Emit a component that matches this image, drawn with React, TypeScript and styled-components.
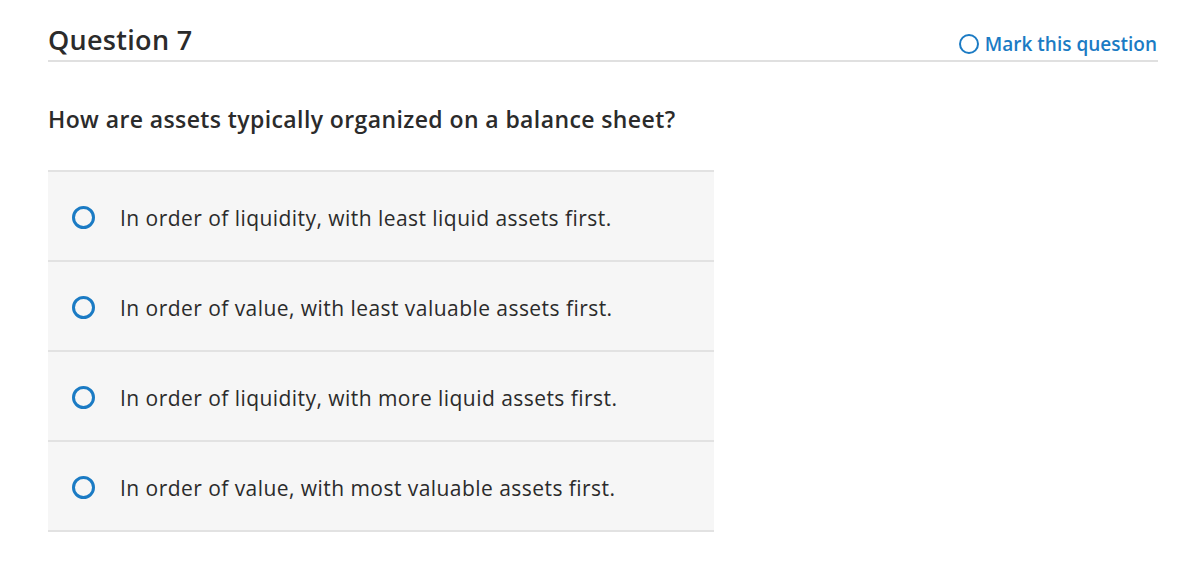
import React from 'react';
import styled, { createGlobalStyle } from 'styled-components';

const GlobalStyle = createGlobalStyle`
    html, body {
        margin: 0;
        padding: 0;
        background: #ffffff;
    }
    body {
        font-family: "Open Sans", Lato, Arial, sans-serif;
        color: #2b2b2b;
    }
`

const Page = styled.div`
    padding: 23px 22px 0 48px;
    width: 1110px;
`

const Header = styled.div`
    display: flex;
    justify-content: space-between;
    align-items: flex-end;
    border-bottom: 2px solid #e0e0e0;
    padding-bottom: 3px;
`

const Title = styled.h1`
    margin: 0;
    font-size: 27px;
    font-weight: 600;
    letter-spacing: 0.3px;
    color: #2b2b2b;
    line-height: 34px;
`

const MarkButton = styled.button`
    display: flex;
    align-items: center;
    gap: 6px;
    background: none;
    border: none;
    padding: 0 1px 0 0;
    margin-bottom: 0;
    font-family: inherit;
    font-size: 19px;
    font-weight: 600;
    color: #1b7bc4;
    cursor: pointer;
`

const QuestionText = styled.p`
    margin: 42px 0 36px;
    font-size: 23px;
    font-weight: 600;
    letter-spacing: 0.4px;
    line-height: 30px;
    color: #2b2b2b;
`

const Options = styled.div`
    display: flex;
    flex-direction: column;
    width: 666px;
    border-top: 2px solid #e2e2e2;
`

const Option = styled.label`
    display: flex;
    align-items: center;
    height: 85px;
    padding: 3px 0 0 24px;
    gap: 25px;
    background: #f6f6f6;
    border-bottom: 2px solid #e2e2e2;
    cursor: pointer;
`

const Radio = styled.span<{ $size: number; $stroke: number }>`
    display: inline-block;
    box-sizing: border-box;
    width: ${p => p.$size}px;
    height: ${p => p.$size}px;
    border-radius: 50%;
    border: ${p => p.$stroke}px solid #1b7bc4;
    flex-shrink: 0;
`

const OptionText = styled.span`
    font-size: 21px;
    letter-spacing: 0.45px;
    color: #2b2b2b;
`

const answers = [
    'In order of liquidity, with least liquid assets first.',
    'In order of value, with least valuable assets first.',
    'In order of liquidity, with more liquid assets first.',
    'In order of value, with most valuable assets first.',
]

export default function App() {
    return (
        <Page>
            <GlobalStyle />
            <Header>
                <Title>Question 7</Title>
                <MarkButton>
                    <Radio $size={20} $stroke={2} />
                    Mark this question
                </MarkButton>
            </Header>
            <QuestionText>How are assets typically organized on a balance sheet?</QuestionText>
            <Options>
                {answers.map(a => (
                    <Option key={a}>
                        <Radio $size={23} $stroke={3} />
                        <OptionText>{a}</OptionText>
                    </Option>
                ))}
            </Options>
        </Page>
    );
}
